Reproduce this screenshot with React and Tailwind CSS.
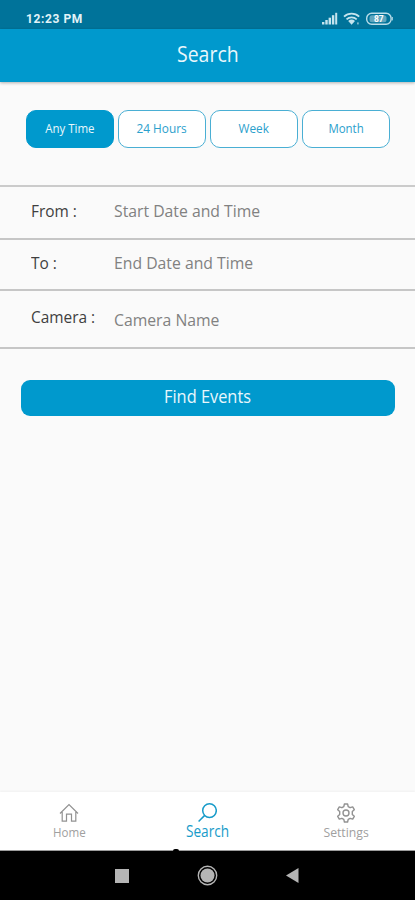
import { useState } from "react";

const ranges = [
  { id: "any", label: "Any Time", text: "text-[12.5px] pb-px scale-x-[0.92]" },
  { id: "day", label: "24 Hours", text: "text-[13px] pb-[3px] scale-x-[0.91]" },
  { id: "week", label: "Week", text: "text-[13px] pb-[3px] scale-x-[0.91]" },
  { id: "month", label: "Month", text: "text-[13px] pb-[3px] scale-x-[0.88]" },
];

const fields = [
  { label: "From :", placeholder: "Start Date and Time", row: "h-[53px]", offset: "" },
  { label: "To :", placeholder: "End Date and Time", row: "h-[51px]", offset: "" },
  { label: "Camera :", placeholder: "Camera Name", row: "h-[58px]", offset: "pt-[5px]" },
];

const StatusBar = () => (
  <div className="h-[29px] shrink-0 bg-[#00739a] flex items-center pl-[26px] pr-[22px] pt-[9px] text-white">
    <span className="font-['Roboto','Open_Sans',sans-serif] font-bold text-[12px] leading-[20px] tracking-[0.6px] text-[#e2f3f8]">
      12:23 PM
    </span>
    <svg className="ml-auto" width="72" height="14" viewBox="0 0 72 14">
      <g fill="#c5e4ee">
        <rect x="1" y="10" width="2.4" height="2.5" />
        <rect x="4.3" y="8" width="2.4" height="4.5" />
        <rect x="7.6" y="5.7" width="2.4" height="6.8" />
        <rect x="10.9" y="3.2" width="2.4" height="9.3" />
        <rect x="14.2" y="0.8" width="2" height="11.7" />
      </g>
      <g fill="none" stroke="#c5e4ee" strokeWidth="1.8">
        <path d="M23 4.6a11.2 11.2 0 0 1 15.2 0" />
        <path d="M25.5 7.3a7.5 7.5 0 0 1 10.2 0" />
      </g>
      <path d="M27.2 9a5.2 5.2 0 0 1 6.8 0l-3.4 3.7z" fill="#c5e4ee" />
      <rect x="36" y="10.4" width="1.8" height="2" fill="#7db9cd" />
      <rect x="45.7" y="1.2" width="24.4" height="11" rx="5" fill="none" stroke="#b9dde9" strokeWidth="1.4" />
      <rect x="48.5" y="3.2" width="17" height="7" rx="2.5" fill="#5fa6be" />
      <path d="M71.3 5v3.4" stroke="#b9dde9" />
      <text x="57.8" y="10" textAnchor="middle" fontSize="8.5" fontWeight="700" fontFamily="Roboto, sans-serif" fill="#fff">
        87
      </text>
    </svg>
  </div>
);

const HomeIcon = () => (
  <svg width="20" height="20" viewBox="0 0 20 20" fill="none" stroke="#929292" strokeWidth="1.2">
    <path d="M1 10.5 10 1.5l9 9M3.2 9v9.2h4.3v-7h5v7h4.3V9" />
  </svg>
);

const SearchIcon = () => (
  <svg width="20" height="20" viewBox="0 0 20 20" fill="none" stroke="#179bc9" strokeWidth="1.5">
    <circle cx="12.5" cy="7.6" r="6.8" />
    <path d="M7.7 12.4 1.6 18.5" />
  </svg>
);

const SettingsIcon = () => (
  <svg width="20" height="20" viewBox="0 0 20 20" fill="none" stroke="#929292" strokeWidth="1.4" strokeLinejoin="round">
    <path d="M8.4 1h3.2l.6 2.6 1.9 1.1 2.6-.8 1.6 2.8-2 1.8v2.9l2 1.9-1.6 2.8-2.6-.8-1.9 1.1-.6 2.6H8.4l-.6-2.6-1.9-1.1-2.6.8-1.6-2.8 2-1.9V8.5l-2-1.8 1.6-2.8 2.6.8 1.9-1.1z" />
    <circle cx="10" cy="10" r="3" />
  </svg>
);

const tabs = [
  { label: "Home", Icon: HomeIcon, text: "text-[13px] scale-x-[0.89]" },
  { label: "Search", Icon: SearchIcon, text: "text-[15.5px] -mt-px scale-x-[0.88]" },
  { label: "Settings", Icon: SettingsIcon, text: "text-[13px] scale-x-[0.94]" },
];

const App = () => {
  const [range, setRange] = useState("any");
  const [tab, setTab] = useState("Search");

  return (
    <div className="w-full h-[900px] flex flex-col overflow-hidden bg-[#fafafa] font-['Open_Sans','Noto_Sans',sans-serif]">
      <StatusBar />

      <header className="h-[53px] shrink-0 bg-[#0099cd] flex items-center justify-center pb-[5px] shadow-[0_1px_3px_rgba(0,0,0,0.3)]">
        <h1 className="text-[22px] leading-[30px] text-[#e9f7fc] scale-x-[0.885]">Search</h1>
      </header>

      <div className="h-[103px] shrink-0 flex gap-1 pl-[26px] pr-[25px] pt-[28px]">
        {ranges.map((r) => (
          <button
            key={r.id}
            onClick={() => setRange(r.id)}
            className={`flex-1 h-[38px] rounded-[10px] border flex items-center justify-center ${
              range === r.id
                ? "bg-[#0099cd] border-[#0099cd] text-[#e9f7fc]"
                : "bg-white border-[#4aafd4] text-[#2ba0cc]"
            }`}
          >
            <span className={`${r.text} leading-[18px]`}>{r.label}</span>
          </button>
        ))}
      </div>

      <section className="shrink-0 border-t-2 border-[#cbcbcb]">
        {fields.map((f) => (
          <label
            key={f.label}
            className={`${f.row} flex items-center pl-[31px] pb-[4px] border-b-2 border-[#c6c6c6] text-[16.5px] leading-[22px]`}
          >
            <span className="w-[83px] whitespace-nowrap text-[#3f3f3f] origin-left scale-x-[0.935]">{f.label}</span>
            <span className={`${f.offset} whitespace-nowrap text-[#818181] origin-left scale-x-[0.955]`}>
              {f.placeholder}
            </span>
          </label>
        ))}
      </section>

      <button className="mt-[31px] ml-[21px] mr-[20px] h-[36px] shrink-0 rounded-[9px] bg-[#0099cd] flex items-center justify-center pb-[4px]">
        <span className="text-[17.5px] leading-[24px] text-[#e9f7fc] scale-x-[0.935]">Find Events</span>
      </button>

      <nav className="mt-auto h-[59px] shrink-0 bg-white flex border-b border-[#9c9c9c] shadow-[0_-1px_2px_rgba(0,0,0,0.04)] relative">
        {tabs.map(({ label, Icon, text }) => (
          <button
            key={label}
            onClick={() => setTab(label)}
            className={`flex-1 flex flex-col items-center pt-[11px] ${
              tab === label ? "text-[#179bc9]" : "text-[#a0a0a0]"
            }`}
          >
            <Icon />
            <span className={`${text} leading-[18px]`}>{label}</span>
          </button>
        ))}
        <span className="absolute left-[173px] -bottom-px w-[6px] h-[2px] rounded-t-sm bg-black" />
      </nav>

      {/* Android navigation keys */}
      <div className="h-[49px] shrink-0 bg-black flex items-center pl-[115px]">
        <div className="size-[14px] bg-[#b5b5b5]" />
        <svg className="ml-[68px]" width="21" height="21" viewBox="0 0 21 21">
          <circle cx="10.5" cy="10.5" r="9.2" fill="none" stroke="#b5b5b5" strokeWidth="1.4" />
          <circle cx="10.5" cy="10.5" r="7" fill="#b5b5b5" />
        </svg>
        <svg className="ml-[68px]" width="13" height="15" viewBox="0 0 13 15">
          <path d="M0 7.5 12.5 0v15z" fill="#b5b5b5" />
        </svg>
      </div>
    </div>
  );
};

export default App;
